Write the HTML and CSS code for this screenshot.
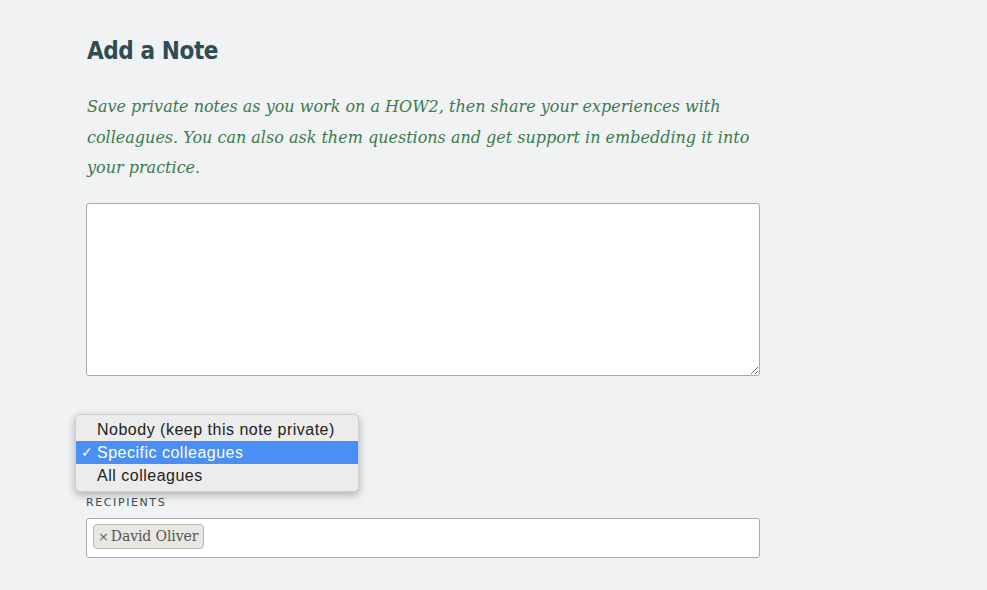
FILE: index.html
```html
<!DOCTYPE html>
<html>
<head>
<meta charset="utf-8">
<link rel="stylesheet" href="styles.css">
</head>
<body>
<main class="page">
  <h1 class="title">Add a Note</h1>
  <p class="intro">Save private notes as you work on a HOW2, then share your experiences with colleagues. You can also ask them questions and get support in embedding it into your practice.</p>
  <div class="note-box"><textarea class="note"></textarea></div>
  <div class="share">
    <div class="label share-label">SHARE WITH <span class="req">*</span></div>
    <div class="select-space"></div>
    <ul class="menu">
      <li class="opt">Nobody (keep this note private)</li>
      <li class="opt sel"><span class="check">✓</span>Specific colleagues</li>
      <li class="opt">All colleagues</li>
    </ul>
  </div>
  <div class="label">RECIPIENTS</div>
  <div class="recips">
    <span class="tag"><span class="x">×</span>David Oliver</span>
  </div>
</main>
</body>
</html>
```
FILE: styles.css
```css
html, body { margin: 0; padding: 0; }
body { background: #f0f2f4; width: 987px; height: 590px; overflow: hidden; }
.page { padding: 34px 0 0 86px; width: 674px; }
.title {
  margin: 0 0 0 1px;
  font-family: "DejaVu Sans Condensed", "DejaVu Sans", sans-serif;
  font-weight: bold; font-size: 24px; color: #2f4c53; line-height: 34px;
  letter-spacing: -0.4px;
}
.intro {
  margin: 24px 0 0 1px;
  font-family: "DejaVu Serif", serif; font-style: italic;
  font-size: 16px; line-height: 30.5px; color: #3d7a4d;
  width: 674px;
}
.note-box { margin-top: 19px; }
.note {
  display: block; box-sizing: border-box; width: 674px; height: 173px;
  border: 1px solid #a9a9a9; border-radius: 3px; background: #fff; margin: 0;
  resize: vertical;
}
.share { position: relative; margin-top: 36px; }
.label {
  font-family: "DejaVu Sans", sans-serif; font-size: 11px; letter-spacing: 1.6px;
  color: #3a4c52; line-height: 14px;
}
.share-label { margin-left: 1px; }
.req { color: #3d7a4d; }
.select-space { height: 70px; }
.menu {
  position: absolute; left: -11px; top: 2px; width: 284px; box-sizing: border-box;
  margin: 0; padding: 3px 0 4px; list-style: none;
  background: #ececec; border: 1px solid #cfcfcf; border-radius: 5px;
  box-shadow: 0 3px 8px rgba(0,0,0,0.28);
  font-family: "Liberation Sans", Arial, sans-serif; font-size: 16px; letter-spacing: 0.5px; color: #222;
}
.opt { height: 23px; line-height: 23px; padding-left: 21px; position: relative; }
.opt.sel { background: #4a8ff3; color: #fff; }
.check { position: absolute; left: 5px; top: 0; font-size: 14px; }
.recips {
  margin-top: 8px; box-sizing: border-box; width: 674px; height: 40px;
  border: 1px solid #a9a9a9; border-radius: 3px; background: #fff;
  padding: 5px 0 0 6px;
}
.tag {
  display: inline-block; height: 25px; box-sizing: border-box;
  padding: 0 5px 0 4px; line-height: 23px;
  border: 1px solid #b9b7b0; border-radius: 4px; background: #e9e7e1;
  font-family: "DejaVu Serif", serif; font-size: 14px; color: #555;
  letter-spacing: -0.1px;
}
.x { font-family: "DejaVu Sans", sans-serif; font-size: 13px; color: #666; margin-right: 2px; }
```
